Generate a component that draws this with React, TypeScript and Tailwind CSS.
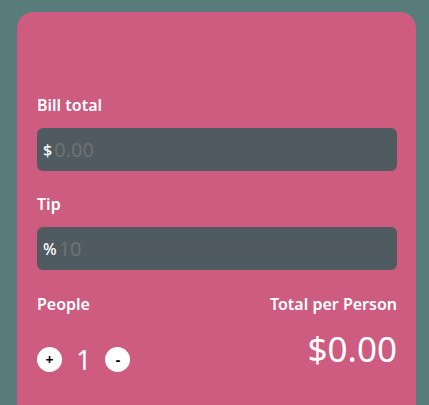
import { useState } from "react";

function Field({ label, symbol, placeholder }: { label: string; symbol: string; placeholder: string }) {
  return (
    <div className="flex flex-col">
      <label className="text-[16px] font-semibold text-white leading-none">{label}</label>
      <div className="mt-[15px] flex h-[43px] items-center rounded-[6px] bg-[#4f5b61] px-[6px]">
        <span className="text-[16px] font-medium text-white">{symbol}</span>
        <input
          className="ml-[2px] w-full bg-transparent text-[20px] text-white outline-none placeholder:text-[#6d7273]"
          placeholder={placeholder}
        />
      </div>
    </div>
  );
}

export default function App() {
  const [people, setPeople] = useState(1);
  return (
    <div className="h-[405px] overflow-hidden bg-[#587c79] pl-[17px] pt-[12px] font-['Noto_Sans',sans-serif]">
      <div className="h-[420px] w-[399px] rounded-t-[16px] bg-[#cd5c80] pl-[20px] pr-[19px] pt-[85px]">
        <div className="flex flex-col gap-[25px]">
          <Field label="Bill total" symbol="$" placeholder="0.00" />
          <Field label="Tip" symbol="%" placeholder="10" />
        </div>
        <div className="mt-[26px] flex justify-between">
          <div className="flex flex-col">
            <span className="text-[16px] font-semibold text-white leading-none">People</span>
            <div className="mt-[34px] flex items-center">
              <button
                onClick={() => setPeople(people + 1)}
                className="flex h-[25px] w-[25px] items-center justify-center rounded-full bg-white text-[14px] font-bold text-black"
              >
                +
              </button>
              <span className="mx-[14px] text-[27px] leading-none text-white">{people}</span>
              <button
                onClick={() => setPeople(Math.max(1, people - 1))}
                className="flex h-[25px] w-[25px] items-center justify-center rounded-full bg-white text-[14px] font-bold text-black"
              >
                -
              </button>
            </div>
          </div>
          <div className="flex flex-col items-end">
            <span className="text-[16px] font-semibold text-white leading-none">Total per Person</span>
            <span className="mt-[19px] text-[35px] leading-none text-white">$0.00</span>
          </div>
        </div>
      </div>
    </div>
  );
}
